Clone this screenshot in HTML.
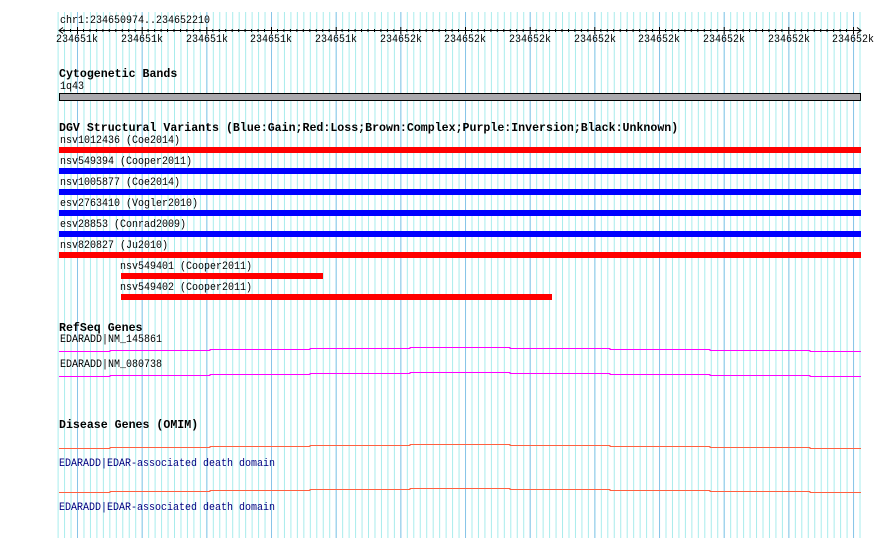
<!DOCTYPE html>
<html><head><meta charset="utf-8"><style>
body{margin:0;background:#fff;}
#c{position:relative;width:890px;height:538px;overflow:hidden;background:#fff;font-family:"Liberation Mono","DejaVu Sans Mono",monospace;font-size:10px;color:#000;}
.t{position:absolute;white-space:pre;line-height:11px;transform:scaleY(1.12);transform-origin:0 0;}
.h{font-weight:bold;font-size:11.6px;line-height:12px;transform:none;}
.b{color:#000080;}
svg{position:absolute;left:0;top:0;}
</style></head><body><div id="c">
<svg width="890" height="538">
<defs>
<pattern id="mn" x="57.6" y="0" width="6.467" height="538" patternUnits="userSpaceOnUse"><rect x="0" y="0" width="1" height="538" fill="#a8ecec"/></pattern>
<pattern id="mj" x="77" y="0" width="64.67" height="538" patternUnits="userSpaceOnUse"><rect x="0" y="0" width="1" height="538" fill="#88c4e8"/></pattern>
</defs>
<rect x="57" y="12" width="805" height="526" fill="url(#mn)"/>
<rect x="76" y="12" width="786" height="526" fill="url(#mj)"/>
<line x1="59" y1="30.5" x2="861" y2="30.5" stroke="#000"/>
<path d="M63 27.5L59 30.5L63 33.5M857 27.5L861 30.5L857 33.5" fill="none" stroke="#000"/>
<g stroke="#000">
<path d="M77.5 27v7M142.2 27v7M206.8 27v7M271.5 27v7M336.2 27v7M400.8 27v7M465.5 27v7M530.2 27v7M594.8 27v7M659.5 27v7M724.2 27v7M788.8 27v7M853.5 27v7" />
</g>
<rect x="59.5" y="93.5" width="801" height="7" fill="#aaa9ad" stroke="#000"/>
<rect x="59" y="147" width="802" height="6" fill="#ff0000"/>
<rect x="59" y="168" width="802" height="6" fill="#0000ff"/>
<rect x="59" y="189" width="802" height="6" fill="#0000ff"/>
<rect x="59" y="210" width="802" height="6" fill="#0000ff"/>
<rect x="59" y="231" width="802" height="6" fill="#0000ff"/>
<rect x="59" y="252" width="802" height="6" fill="#ff0000"/>
<rect x="121" y="273" width="202" height="6" fill="#ff0000"/>
<rect x="121" y="294" width="431" height="6" fill="#ff0000"/>
<g fill="none" stroke="#ff00ff" stroke-width="1">
<path d="M59 351.5H110V350.5H210V349.5H310V348.5H410V347.5H510V348.5H610V349.5H710V350.5H810V351.5H861"/>
<path d="M59 376.5H110V375.5H210V374.5H310V373.5H410V372.5H510V373.5H610V374.5H710V375.5H810V376.5H861"/>
</g>
<g fill="none" stroke="#ff6040" stroke-width="1">
<path d="M59 448.5H110V447.5H210V446.5H310V445.5H410V444.5H510V445.5H610V446.5H710V447.5H810V448.5H861"/>
<path d="M59 492.5H110V491.5H210V490.5H310V489.5H410V488.5H510V489.5H610V490.5H710V491.5H810V492.5H861"/>
</g>
<g stroke="#000">
<path d="M64 29v3M70.5 29v3M83.5 29v3M90 29v3M96.4 29v3M102.9 29v3M109.3 29v3M115.8 29v3M122.3 29v3M128.7 29v3M135.2 29v3M148.1 29v3M154.6 29v3M161.1 29v3M167.5 29v3M174 29v3M180.5 29v3M186.9 29v3M193.4 29v3M199.9 29v3M212.8 29v3M219.3 29v3M225.7 29v3M232.2 29v3M238.7 29v3M245.1 29v3M251.6 29v3M258.1 29v3M264.5 29v3M277.5 29v3M283.9 29v3M290.4 29v3M296.9 29v3M303.3 29v3M309.8 29v3M316.3 29v3M322.7 29v3M329.2 29v3M342.1 29v3M348.6 29v3M355.1 29v3M361.5 29v3M368 29v3M374.5 29v3M380.9 29v3M387.4 29v3M393.9 29v3M406.8 29v3M413.3 29v3M419.7 29v3M426.2 29v3M432.7 29v3M439.1 29v3M445.6 29v3M452.1 29v3M458.5 29v3M471.5 29v3M477.9 29v3M484.4 29v3M490.9 29v3M497.3 29v3M503.8 29v3M510.3 29v3M516.7 29v3M523.2 29v3M536.1 29v3M542.6 29v3M549.1 29v3M555.5 29v3M562 29v3M568.5 29v3M574.9 29v3M581.4 29v3M587.9 29v3M600.8 29v3M607.3 29v3M613.7 29v3M620.2 29v3M626.7 29v3M633.1 29v3M639.6 29v3M646.1 29v3M652.5 29v3M665.5 29v3M671.9 29v3M678.4 29v3M684.9 29v3M691.3 29v3M697.8 29v3M704.3 29v3M710.7 29v3M717.2 29v3M730.1 29v3M736.6 29v3M743.1 29v3M749.5 29v3M756 29v3M762.5 29v3M768.9 29v3M775.4 29v3M781.9 29v3M794.8 29v3M801.3 29v3M807.7 29v3M814.2 29v3M820.7 29v3M827.1 29v3M833.6 29v3M840.1 29v3M846.5 29v3"/>
</g>
</svg>
<div class="t" style="left:60px;top:15px">chr1:234650974..234652210</div>
<div class="t" style="left:56px;top:34px">234651k</div>
<div class="t" style="left:121px;top:34px">234651k</div>
<div class="t" style="left:186px;top:34px">234651k</div>
<div class="t" style="left:250px;top:34px">234651k</div>
<div class="t" style="left:315px;top:34px">234651k</div>
<div class="t" style="left:380px;top:34px">234652k</div>
<div class="t" style="left:444px;top:34px">234652k</div>
<div class="t" style="left:509px;top:34px">234652k</div>
<div class="t" style="left:574px;top:34px">234652k</div>
<div class="t" style="left:638px;top:34px">234652k</div>
<div class="t" style="left:703px;top:34px">234652k</div>
<div class="t" style="left:768px;top:34px">234652k</div>
<div class="t" style="left:832px;top:34px">234652k</div>
<div class="t h" style="left:59px;top:69px">Cytogenetic Bands</div>
<div class="t" style="left:60px;top:81px">1q43</div>
<div class="t h" style="left:59px;top:123px">DGV Structural Variants (Blue:Gain;Red:Loss;Brown:Complex;Purple:Inversion;Black:Unknown)</div>
<div class="t" style="left:60px;top:135px">nsv1012436 (Coe2014)</div>
<div class="t" style="left:60px;top:156px">nsv549394 (Cooper2011)</div>
<div class="t" style="left:60px;top:177px">nsv1005877 (Coe2014)</div>
<div class="t" style="left:60px;top:198px">esv2763410 (Vogler2010)</div>
<div class="t" style="left:60px;top:219px">esv28853 (Conrad2009)</div>
<div class="t" style="left:60px;top:240px">nsv820827 (Ju2010)</div>
<div class="t" style="left:120px;top:261px">nsv549401 (Cooper2011)</div>
<div class="t" style="left:120px;top:282px">nsv549402 (Cooper2011)</div>
<div class="t h" style="left:59px;top:323px">RefSeq Genes</div>
<div class="t" style="left:60px;top:334px">EDARADD|NM_145861</div>
<div class="t" style="left:60px;top:359px">EDARADD|NM_080738</div>
<div class="t h" style="left:59px;top:420px">Disease Genes (OMIM)</div>
<div class="t b" style="left:59px;top:458px">EDARADD|EDAR-associated death domain</div>
<div class="t b" style="left:59px;top:502px">EDARADD|EDAR-associated death domain</div>
</div></body></html>
